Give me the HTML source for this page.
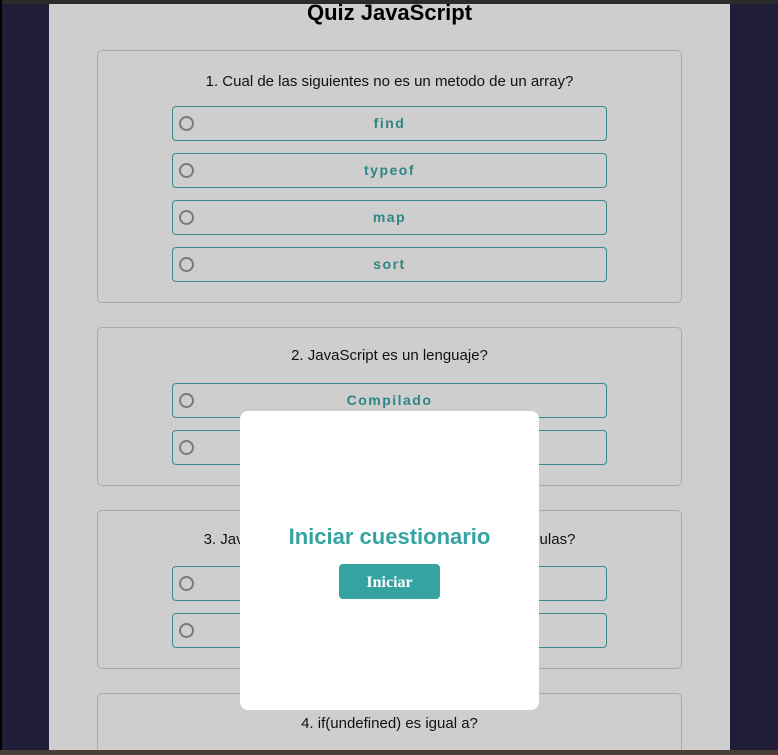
<!DOCTYPE html>
<html><head><style>
*{margin:0;padding:0;box-sizing:border-box}
html{width:778px;height:755px;overflow:hidden}
body{width:778px;height:755px;overflow:hidden;background:#1f1d37;position:relative;font-family:"Liberation Sans",sans-serif}
.topbar{position:absolute;left:0;top:0;width:778px;height:4px;background:#2b2b2b}
.lb{position:absolute;left:0;top:0;width:2px;height:755px;background:#000}
.bot{position:absolute;left:0;top:750px;width:778px;height:5px;background:#4a3f36}
.panel{position:absolute;left:49px;top:4px;width:681px;height:746px;background:#cecece;overflow:hidden}
h1{position:absolute;left:0;width:681px;top:-4px;text-align:center;font-size:22px;font-weight:bold;color:#000}
.card{position:absolute;left:48px;width:585px;border:1px solid #aaa;border-radius:5px}
.q{position:absolute;left:0;width:100%;text-align:center;font-size:15px;color:#111}
.opt{position:absolute;left:74px;width:435px;height:35px;border:1px solid #3a8a8a;border-radius:4px;text-align:center;line-height:32px;font-size:14px;font-weight:bold;letter-spacing:1.5px;color:#2e8585}
.opt::before{content:"";position:absolute;left:6px;top:9px;width:11px;height:11px;border:2px solid #7a7a7a;border-radius:50%}
.modal{position:absolute;left:240px;top:411px;width:299px;height:299px;background:#fff;border-radius:8px}
.mt{position:absolute;left:0;width:100%;top:113px;text-align:center;font-size:22px;font-weight:bold;color:#36a3a3}
.btn{position:absolute;left:99px;top:153px;width:101px;height:35px;background:#36a3a3;border-radius:4px;color:#fff;font-family:"Liberation Serif",serif;font-weight:bold;font-size:16px;text-align:center;line-height:37px}
</style></head><body>
<div class="topbar"></div>
<div class="panel">
<h1>Quiz JavaScript</h1>
<div class="card" style="top:46px;height:253px">
<div class="q" style="top:22px">1. Cual de las siguientes no es un metodo de un array?</div>
<div class="opt" style="top:55px">find</div>
<div class="opt" style="top:102px">typeof</div>
<div class="opt" style="top:149px">map</div>
<div class="opt" style="top:196px">sort</div>
</div>
<div class="card" style="top:323px;height:159px">
<div class="q" style="top:19px">2. JavaScript es un lenguaje?</div>
<div class="opt" style="top:55px">Compilado</div>
<div class="opt" style="top:102px">Interpretado</div>
</div>
<div class="card" style="top:506px;height:159px">
<div class="q" style="top:20px">3. JavaScript distingue entre mayusculas y minusculas?</div>
<div class="opt" style="top:55px">Si</div>
<div class="opt" style="top:102px">No</div>
</div>
<div class="card" style="top:689px;height:60px">
<div class="q" style="top:21px">4. if(undefined) es igual a?</div>
</div>
</div>
<div class="lb"></div>
<div class="bot"></div>
<div class="modal"><div class="mt">Iniciar cuestionario</div><div class="btn">Iniciar</div></div>
</body></html>
